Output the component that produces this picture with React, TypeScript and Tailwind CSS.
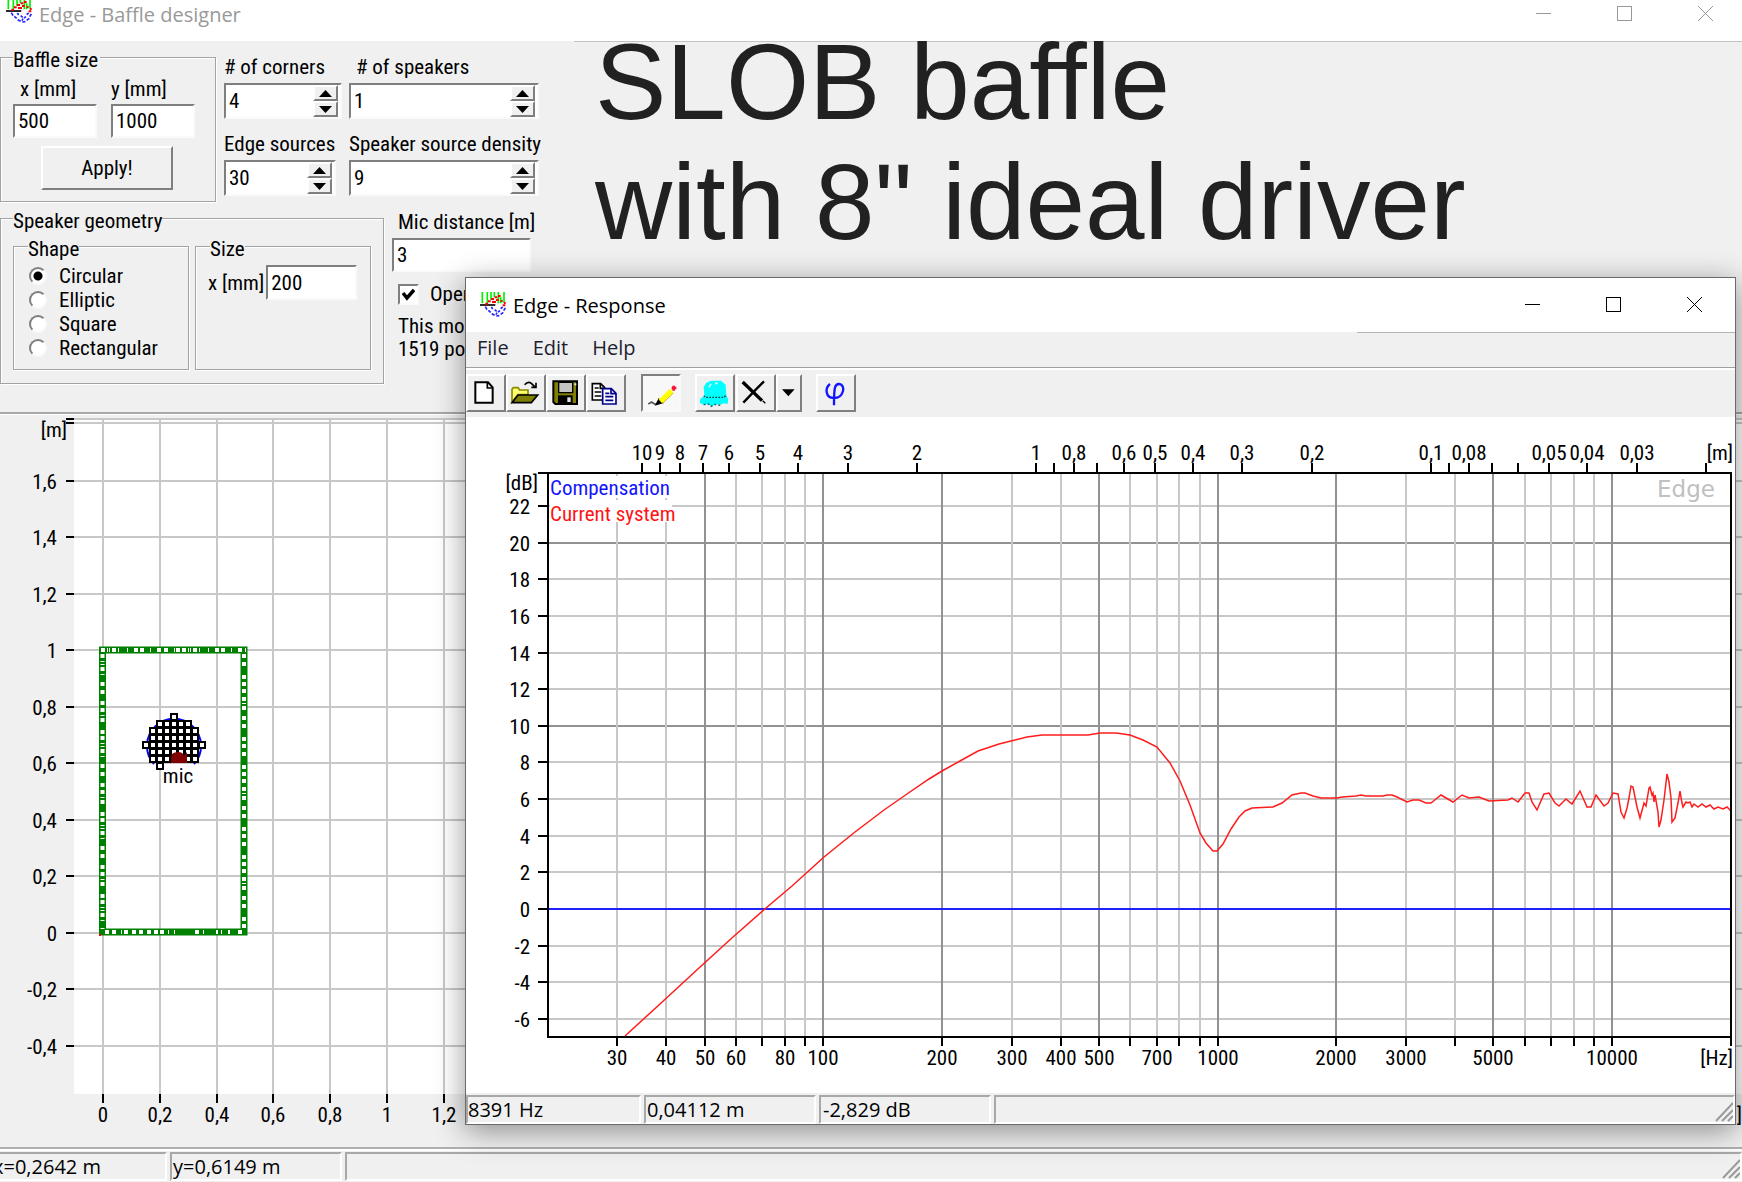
import { useState } from "react";
import type { ReactNode } from "react";
import clsx from "clsx";

const SUNKEN = "border-2 border-t-[#7f7f7f] border-l-[#7f7f7f] border-r-[#fafafa] border-b-[#fafafa]";
const RAISED = "border-2 border-t-white border-l-white border-r-[#7f7f7f] border-b-[#7f7f7f]";
const CONDENSED = "font-['Roboto_Condensed','Liberation_Sans',sans-serif]";
const SEGOE = "font-['Open_Sans','Noto_Sans',sans-serif]";

/* ---------- shared bits ---------- */

function Logo() {
  return (
    <svg className="h-[25px] w-[27px] shrink-0" viewBox="0 0 81 75">
      <path d="M7 0V34M22 0V34M33 0V24M43 0V16M55 0V34M62 16V34M72 0V34" stroke="#00f000" strokeWidth="5" />
      <path d="M0 39H46" stroke="#000" strokeWidth="5" />
      <path d="M16 35h8M24 28h8M33 21h9M44 16h8M54 12h8M36 30h12M48 24h8M62 27h6M68 40h8M72 33h5" stroke="#ff0000" strokeWidth="6" />
      <path
        d="M16 44l5 9M25 55l7 6M35 65l9 5M49 72l9-1M62 67l8-6M71 56l5-8M34 45l4 6M44 53l6 5M54 60l6-4M62 50l6-5M48 68l3-6"
        stroke="#2424ff"
        strokeWidth="5"
      />
    </svg>
  );
}

function WindowButtons({ className }: { className: string }) {
  return (
    <div className={clsx("flex gap-[66px]", className)}>
      <button aria-label="Minimize">
        <svg className="h-[15px] w-[15px]" viewBox="0 0 15 15" stroke="currentColor" fill="none">
          <path d="M0 7.5H15" />
        </svg>
      </button>
      <button aria-label="Maximize">
        <svg className="h-[15px] w-[15px]" viewBox="0 0 15 15" stroke="currentColor" fill="none">
          <rect x="0.5" y="0.5" width="14" height="14" />
        </svg>
      </button>
      <button aria-label="Close">
        <svg className="h-[15px] w-[15px]" viewBox="0 0 15 15" stroke="currentColor" fill="none">
          <path d="M0 0L15 15M15 0L0 15" />
        </svg>
      </button>
    </div>
  );
}

function Group({ title, className, legendClass, children }: { title: string; className: string; legendClass?: string; children: ReactNode }) {
  return (
    <fieldset className={clsx("border border-[#a3a3a3] shadow-[1px_1px_0_#fff,inset_1px_1px_0_#fff]", className)}>
      <legend className={clsx("h-4 bg-[#f0f0f0] leading-[22px]", legendClass)}>{title}</legend>
      {children}
    </fieldset>
  );
}

function Field({ id, value, className }: { id: string; value: string; className: string }) {
  const [text, setText] = useState(value);
  return (
    <input
      id={id}
      type="text"
      value={text}
      onChange={(e) => setText(e.target.value)}
      className={clsx("bg-white pl-[3px] outline-none", SUNKEN, className)}
    />
  );
}

function Spin({ id, value, className }: { id: string; value: number; className: string }) {
  const [n, setN] = useState(value);
  return (
    <div className={clsx("flex h-9 bg-white pr-0.5", SUNKEN, className)}>
      <input
        id={id}
        type="text"
        value={n}
        onChange={(e) => setN(Number(e.target.value) || 0)}
        className="min-w-0 flex-1 bg-white pl-[3px] outline-none"
      />
      <div className="flex w-[25px] flex-col bg-[#f0f0f0]">
        <button aria-label="Increase" onClick={() => setN(n + 1)} className={clsx("flex h-4 items-center justify-center", RAISED)}>
          <svg className="h-[7px] w-[13px]" viewBox="0 0 13 7">
            <path d="M0 7L6.5 0L13 7Z" />
          </svg>
        </button>
        <button aria-label="Decrease" onClick={() => setN(n - 1)} className={clsx("flex h-4 items-center justify-center", RAISED)}>
          <svg className="h-[7px] w-[13px]" viewBox="0 0 13 7">
            <path d="M0 0L6.5 7L13 0Z" />
          </svg>
        </button>
      </div>
    </div>
  );
}

function StatusCell({ children, className }: { children?: ReactNode; className: string }) {
  return (
    <div className={clsx("h-[29px] border-2 border-t-[#a8a8a8] border-l-[#a8a8a8] border-r-white border-b-white leading-[26px] whitespace-nowrap", className)}>
      {children}
    </div>
  );
}

function Grip() {
  return (
    <svg className="h-[20px] w-[18px] self-end" viewBox="0 0 18 20" stroke="#9a9a9a" strokeWidth="2">
      <path d="M1 19L18 1M7 19L18 8M13 19L18 14" />
    </svg>
  );
}

/* ---------- baffle designer ---------- */

const SHAPES = ["Circular", "Elliptic", "Square", "Rectangular"];

function ControlPanel() {
  const [shape, setShape] = useState("Circular");
  const [open, setOpen] = useState(true);

  return (
    <div className="flex w-[574px] shrink-0 flex-col pt-[7px] whitespace-nowrap">
      <div className="flex">
        <Group title="Baffle size" className="h-[153px] w-[216px] shrink-0 pl-3" legendClass="pr-0.5">
          <div className="mt-3 flex gap-[14px]">
            <div className="flex flex-col gap-[3px]">
              <label htmlFor="bx" className="pl-[7px]">x [mm]</label>
              <Field id="bx" value="500" className="h-[34px] w-[84px]" />
            </div>
            <div className="flex flex-col gap-[3px]">
              <label htmlFor="by">y [mm]</label>
              <Field id="by" value="1000" className="h-[34px] w-[84px]" />
            </div>
          </div>
          <button className={clsx("mt-2 ml-7 h-11 w-[132px]", RAISED)}>Apply!</button>
        </Group>
        <div className="ml-2 flex w-[125px] flex-col pt-1.5">
          <label htmlFor="corners">
            # of corners
          </label>
          <Spin id="corners" value={4} className="mt-1 w-[118px]" />
          <label htmlFor="edge" className="mt-[13px]">
            Edge sources
          </label>
          <Spin id="edge" value={30} className="mt-1 w-[112px]" />
        </div>
        <div className="flex flex-col pt-1.5">
          <label htmlFor="speakers" className="pl-[7px]">
            # of speakers
          </label>
          <Spin id="speakers" value={1} className="mt-1 w-[190px]" />
          <label htmlFor="density" className="mt-[13px]">
            Speaker source density
          </label>
          <Spin id="density" value={9} className="mt-1 w-[190px]" />
        </div>
      </div>

      <div className="mt-2 flex">
        <Group title="Speaker geometry" className="h-[174px] w-[384px] shrink-0 pl-3">
          <div className="mt-3 flex gap-1.5">
            <Group title="Shape" className="h-[132px] w-[176px]" legendClass="ml-3.5">
              <div className="mt-2.5 flex flex-col">
                {SHAPES.map((s) => (
                  <label key={s} className="flex items-center gap-3 pl-[15px]">
                    <input
                      type="radio"
                      name="shape"
                      checked={shape === s}
                      onChange={() => setShape(s)}
                      className="h-[18px] w-[18px] appearance-none rounded-full border-2 border-t-[#7f7f7f] border-l-[#7f7f7f] border-r-[#fafafa] border-b-[#fafafa] bg-white checked:bg-[radial-gradient(circle,#000_4px,#fff_5px)]"
                    />
                    {s}
                  </label>
                ))}
              </div>
            </Group>
            <Group title="Size" className="h-[132px] w-[176px]" legendClass="ml-3.5">
              <div className="mt-[11px] flex items-center gap-0.5 pl-3">
                <label htmlFor="sx">x [mm]</label>
                <Field id="sx" value="200" className="h-[35px] w-[91px]" />
              </div>
            </Group>
          </div>
        </Group>
        <div className="ml-2 flex flex-col">
          <label htmlFor="mic" className="pl-1.5">
            Mic distance [m]
          </label>
          <Field id="mic" value="3" className="mt-1 h-[34px] w-[139px]" />
          <label className="mt-2.5 flex items-center gap-[11px] pl-1.5">
            <span className="grid">
              <input
                type="checkbox"
                checked={open}
                onChange={() => setOpen(!open)}
                className={clsx("peer col-start-1 row-start-1 h-[21px] w-[21px] appearance-none bg-white", SUNKEN)}
              />
              <svg className="pointer-events-none col-start-1 row-start-1 m-auto hidden h-[13px] w-[13px] peer-checked:block" viewBox="0 0 13 13">
                <path d="M1 5L5 10L12 2" fill="none" stroke="#000" strokeWidth="3.5" />
              </svg>
            </span>
            Open baffle
          </label>
          <p className="mt-[9px] pl-1.5 leading-[23px]">
            This model has
            <br />
            1519 points
          </p>
        </div>
      </div>
    </div>
  );
}

const METRES_Y = ["1,6", "1,4", "1,2", "1", "0,8", "0,6", "0,4", "0,2", "0", "-0,2", "-0,4"];
const METRES_X = ["0", "0,2", "0,4", "0,6", "0,8", "1", "1,2"];
// columns of the source lattice, row by row
const LATTICE = [[4, 4], [2, 6], [1, 7], [1, 7], [0, 8], [1, 7], [1, 7], [2, 2]];

const my = (i: number) => Math.floor(66 + 56.5 * i);
const mx = (i: number) => Math.round(103 + 56.8 * i);

function BafflePlot() {
  return (
    <svg className="h-[732px] w-full shrink-0 text-[21px]">
      <rect x="74" y="3" width="100%" height="676" fill="#fff" />
      <g stroke="#c8c8c8" strokeWidth="2" shapeRendering="crispEdges">
        {Array.from({ length: 30 }, (_, i) => (
          <path key={i} d={`M${mx(i)} 3V679`} />
        ))}
        <line x1="74" x2="100%" y1="4" y2="4" />
        <line x1="74" x2="100%" y1="8" y2="8" />
        {METRES_Y.map((m, i) => (
          <line key={m} x1="74" x2="100%" y1={my(i)} y2={my(i)} />
        ))}
      </g>
      <g stroke="#000" strokeWidth="2" shapeRendering="crispEdges">
        <path d="M66 4H74M66 8H74" />
        {METRES_Y.map((m, i) => (
          <path key={m} d={`M66 ${my(i)}H74`} />
        ))}
        {Array.from({ length: 30 }, (_, i) => (
          <path key={i} d={`M${mx(i)} 679V688`} />
        ))}
      </g>
      <text x="67" y="22" textAnchor="end">[m]</text>
      {METRES_Y.map((m, i) => (
        <text key={m} x="57" y={my(i) + 8} textAnchor="end">{m}</text>
      ))}
      {METRES_X.map((m, i) => (
        <text key={m} x={mx(i)} y="707" textAnchor="middle">{m}</text>
      ))}
      <text x="100%" y="707" textAnchor="end">[m]</text>

      {/* baffle edge with its sources */}
      <rect x="102.5" y="235" width="141.5" height="282" fill="none" stroke="#008000" strokeWidth="7" />
      <path d="M99 519h2v2h-2z" fill="#f00" />
      <g fill="none" stroke="#fff" strokeWidth="4">
        <path d="M101 235H246" strokeDasharray="4 2 1 1 1 2 4 2 1 8 1 6 4 2 4 6 1 6 4 3 4 6 1 1 4 2" />
        <path d="M101 517H243" strokeDasharray="0 4 4 3 4 5 1 2 4 4 4 3 4 4 4 3 4 2 4 4 1 5 1 20 4 4 1 12 2 3 1 6 2 4" />
        <path d="M102.5 239V514" strokeDasharray="4 3 1 2 1 2 4 3 1 7 4 4 4 7 4 3 4 3 1 2 4 8 4 2" />
        <path d="M244 239V514" strokeDasharray="4 4 4 9 4 3 4 3 4 4 4 2 1 2 4 6 4 4 4 9 4 3" />
      </g>

      {/* driver */}
      <path d="M154 349A27 27 0 1 1 194 349" fill="none" stroke="#0000ff" strokeWidth="2" />
      {LATTICE.map(([from, to], row) =>
        Array.from({ length: to - from + 1 }, (_, k) => (
          <g key={`${row}-${k}`}>
            <rect x={142 + 7 * (from + k)} y={298 + 7 * row} width="8" height="8" fill="#000" />
            <rect x={144 + 7 * (from + k)} y={300 + 7 * row} width="4" height="4" fill="#fff" />
          </g>
        ))
      )}
      <path d="M171 348V343Q171 337 178 337Q183 337 184 341L187 337V348Z" fill="#800000" />
      <text x="178" y="368" textAnchor="middle">mic</text>
    </svg>
  );
}

/* ---------- response window ---------- */

const fx = (hz: number) => Math.round(357.4 + 394.3 * Math.log10(hz / 100));
const wx = (m: number) => Math.round(570 - 394.5 * Math.log10(m));
const dy = (db: number) => Math.round(492 - 18.32 * db);

const FREQS = [30, 40, 50, 60, 70, 80, 90, 100, 200, 300, 400, 500, 600, 700, 800, 900, 1000, 2000, 3000, 4000, 5000, 6000, 7000, 8000, 9000, 10000];
const MAJOR = [50, 100, 200, 500, 1000, 2000, 5000, 10000];
const FREQ_LABELS = [30, 40, 50, 60, 80, 100, 200, 300, 400, 500, 700, 1000, 2000, 3000, 5000, 10000];
const WAVES = [10, 9, 8, 7, 6, 5, 4, 3, 2, 1, 0.9, 0.8, 0.7, 0.6, 0.5, 0.4, 0.3, 0.2, 0.1, 0.09, 0.08, 0.07, 0.06, 0.05, 0.04, 0.03, 0.02];
const NO_WAVE_LABEL = [0.9, 0.7, 0.09, 0.07, 0.06, 0.02];
const LEVELS = [22, 20, 18, 16, 14, 12, 10, 8, 6, 4, 2, 0, -2, -4, -6];

const CURVE =
  "159,619 194,587 233,551 267,520 300,491 326,469 358,440 389,415 418,393 441,377 463,362 476,354 494,344 512,334 533,327 545,324 561,320 576,318 622,318 634,316 650,316 664,318 677,323 691,330 704,346 714,364 724,388 734,416 740,426 747,434 751,434 757,427 765,412 773,400 779,394 786,391 807,390 816,386 826,378 835,376 839,376 847,379 855,381 871,381 876,380 890,379 895,378 900,379 917,379 921,378 926,378 931,380 941,385 947,383 953,383 960,386 965,386 970,382 975,378 987,385 996,378 1003,381 1013,380 1023,384 1042,383 1046,381 1052,385 1059,376 1063,376 1066,385 1071,393 1078,377 1083,376 1089,386 1093,389 1100,382 1106,387 1114,374 1121,390 1125,390 1130,378 1138,389 1142,386 1147,376 1152,377 1155,395 1158,401 1161,391 1163,381 1165,369 1167,370 1171,390 1174,401 1178,386 1180,389 1183,371 1184,370 1186,378 1187,376 1188,385 1189,378 1192,395 1193,410 1195,403 1198,383 1201,357 1203,365 1205,381 1206,405 1209,401 1212,386 1214,374 1216,386 1217,390 1220,385 1222,386 1224,385 1226,390 1228,387 1232,390 1236,387 1240,390 1244,388 1248,392 1252,390 1257,392 1261,390 1265,394";

function ResponseChart() {
  return (
    <svg className="block w-full bg-white text-[21px]" viewBox="0 0 1269 676">
      <g strokeWidth="2" shapeRendering="crispEdges">
        {LEVELS.map((db) => (
          <path key={db} d={`M82 ${dy(db)}H1265`} stroke={db % 10 === 0 ? "#929292" : "#c8c8c8"} />
        ))}
        {FREQS.map((hz) => (
          <path key={hz} d={`M${fx(hz)} 56V619`} stroke={MAJOR.includes(hz) ? "#929292" : "#c8c8c8"} />
        ))}
      </g>

      <rect x="84" y="59" width="118" height="22" fill="#fff" />
      <rect x="84" y="83" width="122" height="22" fill="#fff" />
      <text x="84" y="78" fill="#1414ff">Compensation</text>
      <text x="84" y="104" fill="#ff1414">Current system</text>
      <text x="1220" y="80" textAnchor="middle" fill="#c0c0c0" className="font-['DejaVu_Sans',sans-serif] text-[23px]">
        Edge
      </text>

      <path d={`M82 ${dy(0)}H1265`} stroke="#2020ff" strokeWidth="2" shapeRendering="crispEdges" />
      <polyline points={CURVE} fill="none" stroke="#ff1c1c" strokeWidth="1.5" />

      <g stroke="#000" strokeWidth="2" fill="none" shapeRendering="crispEdges">
        <path d="M72 56H1265V620H82V56" />
        {LEVELS.map((db) => (
          <path key={db} d={`M72 ${dy(db)}H82`} />
        ))}
        {FREQS.map((hz) => (
          <path key={hz} d={`M${fx(hz)} 620V629`} />
        ))}
        <path d="M1265 620V629" />
        {WAVES.map((m) => (
          <path key={m} d={`M${wx(m)} 46V56`} />
        ))}
      </g>

      <text x="72" y="73" textAnchor="end">[dB]</text>
      {LEVELS.map((db) => (
        <text key={db} x="64" y={dy(db) + 8} textAnchor="end">{db}</text>
      ))}
      {FREQ_LABELS.map((hz) => (
        <text key={hz} x={fx(hz)} y="648" textAnchor="middle">{hz}</text>
      ))}
      <text x="1267" y="648" textAnchor="end">[Hz]</text>
      {WAVES.filter((m) => !NO_WAVE_LABEL.includes(m)).map((m) => (
        <text key={m} x={wx(m)} y="43" textAnchor="middle">{String(m).replace(".", ",")}</text>
      ))}
      <text x="1267" y="43" textAnchor="end">[m]</text>
    </svg>
  );
}

function Tool({ label, pressed, narrow, children }: { label: string; pressed?: boolean; narrow?: boolean; children: ReactNode }) {
  return (
    <button aria-label={label} className={clsx("h-[38px]", narrow ? "w-[26px]" : "w-10", pressed ? clsx(SUNKEN, "bg-[#f8f8f8]") : RAISED)}>
      <svg className="h-[34px] w-full" viewBox={narrow ? "6 6 66 102" : "6 6 108 102"} fill="none">
        {children}
      </svg>
    </button>
  );
}

function Toolbar() {
  return (
    <div className="flex h-[50px] border-t border-[#a0a0a0] pt-[6px] shadow-[inset_0_2px_0_#fff]">
      <Tool label="New">
        <path d="M28 25H66L80 40V86H28Z" fill="#fff" stroke="#000" strokeWidth="6" />
        <path d="M64 25V42H80" stroke="#000" strokeWidth="5" />
      </Tool>
      <Tool label="Open">
        <path d="M18 84V46L22 41H36L41 48H66V62H36Z" fill="#ffff70" stroke="#8a8a00" strokeWidth="5" />
        <path d="M18 86L36 63H95L76 86Z" fill="#808000" stroke="#000" strokeWidth="5" />
        <path d="M56 32Q66 20 76 28L86 38M90 26V40H76" stroke="#000" strokeWidth="5" />
      </Tool>
      <Tool label="Save">
        <path d="M22 22H93V90H28L22 84Z" fill="#808000" stroke="#000" strokeWidth="6" />
        <path d="M38 25H80V56H38Z" fill="#c4c4c4" stroke="#000" strokeWidth="4" />
        <path d="M36 64H80V90H36Z" fill="#000" />
        <path d="M64 70H74V84H64Z" fill="#e4e4e4" />
        <path d="M85 28H91V34H85Z" fill="#e4e4e4" />
      </Tool>
      <Tool label="Copy">
        <path d="M19 29H44L56 41V78H19Z" fill="#fff" stroke="#000" strokeWidth="5" />
        <path d="M26 42H38M26 54H46M26 66H46M43 29V43H55" stroke="#000" strokeWidth="5" />
        <path d="M50 44H76L90 58V90H50Z" fill="#fff" stroke="#000090" strokeWidth="5" />
        <path d="M58 58H70M58 68H82M58 79H82M75 44V59H89" stroke="#000090" strokeWidth="5" />
      </Tool>
      <div className="w-[15px]" />
      <Tool label="Draw" pressed>
        <path d="M22 90L32 84L40 90H50" stroke="#555" strokeWidth="5" />
        <path d="M46 91L54 76L64 86Z" fill="#000" stroke="#000" strokeWidth="5" />
        <path d="M58 82L92 50" stroke="#ffff00" strokeWidth="15" />
        <path d="M66 87L97 57" stroke="#c8b400" strokeWidth="3" />
        <path d="M92 42H106M98 35V50" stroke="#ff1030" strokeWidth="8" />
      </Tool>
      <div className="w-[14px]" />
      <Tool label="Baffle">
        <path d="M28 66L26 40L34 26L48 20L78 20L92 32L94 64L100 76L98 90L86 88L76 92L60 90L50 98L40 90L26 92L14 86L16 74Z" fill="#00ffff" />
        <path d="M26 66L36 70H86L94 64" stroke="#003c3c" strokeWidth="4" strokeDasharray="5 4" />
        <path d="M26 92L40 90L48 97L60 91L76 94" stroke="#006464" strokeWidth="4" strokeDasharray="6 6" />
        <path d="M42 40L48 30M60 28H68" stroke="#dff" strokeWidth="5" />
      </Tool>
      <div className="w-px" />
      <Tool label="Delete">
        <path d="M20 24L78 80" stroke="#000" strokeWidth="10" />
        <path d="M84 22L60 46L22 86" stroke="#000" strokeWidth="7" />
        <path d="M80 80L88 88" stroke="#000" strokeWidth="4" />
      </Tool>
      <Tool label="Delete options" narrow>
        <path d="M18 46H56L37 67Z" fill="#000" />
      </Tool>
      <div className="w-[14px]" />
      <Tool label="Phase">
        <path d="M42 30C26 42 28 72 54 72C84 72 90 32 70 30C56 29 54 40 54 94" stroke="#1414ff" strokeWidth="7" />
      </Tool>
    </div>
  );
}

function ResponseWindow() {
  return (
    <section className="absolute top-[277px] right-[6px] left-[465px] border border-[#6a6a6a] bg-[#f0f0f0] shadow-[0_6px_28px_rgba(0,0,0,0.42)]">
      <header className="flex h-[54px] items-center bg-white pr-[33px] pb-0.5 pl-[14px]">
        <Logo />
        <h2 className={clsx("ml-[6px] pt-1 text-[20px] text-black", SEGOE)}>Edge - Response</h2>
        <WindowButtons className="ml-auto text-black" />
      </header>
      <div className="ml-[891px] h-px bg-[#b4b4b4]" />
      <nav className={clsx("flex h-[34px] items-center gap-6 pb-1 pl-[11px] text-[20px] text-[#1e1e30]", SEGOE)}>
        <button>File</button>
        <button>Edit</button>
        <button>Help</button>
      </nav>
      <Toolbar />
      <ResponseChart />
      <footer className={clsx("flex items-center pt-0.5 text-[20px]", SEGOE)}>
        <StatusCell className="w-[175px]">8391 Hz</StatusCell>
        <StatusCell className="ml-[3px] w-[172px] pl-px">0,04112 m</StatusCell>
        <StatusCell className="ml-[3px] w-[172px] pl-0.5">-2,829 dB</StatusCell>
        <StatusCell className="ml-[3px] flex flex-1 justify-end">
          <Grip />
        </StatusCell>
      </footer>
    </section>
  );
}

export default function App() {
  return (
    <main className={clsx("relative flex min-h-screen flex-col overflow-hidden bg-[#f0f0f0] text-[21px] leading-6 text-black", CONDENSED)}>
      <header className="flex h-[41px] items-start bg-white pr-[29px] pl-[6px]">
        <div className="-mt-0.5">
          <Logo />
        </div>
        <h2 className={clsx("ml-[6px] pt-[3px] text-[20px] text-[#999]", SEGOE)}>Edge - Baffle designer</h2>
        <WindowButtons className="ml-auto pt-1.5 text-[#999]" />
      </header>
      <div className="ml-[574px] h-px bg-[#c4c4c4]" />

      <div className="flex h-[370px]">
        <ControlPanel />
        <h1 className="-mt-5 ml-[21px] font-['Liberation_Sans',sans-serif] text-[107px] leading-[120px] whitespace-nowrap text-[#212121]">
          SLOB baffle
          <br />
          with 8" ideal driver
        </h1>
      </div>

      <div className="h-[3px] border-t-2 border-[#a8a8a8] bg-white" />
      <BafflePlot />
      <footer className={clsx("flex border-t-2 border-[#b0b0b0] pt-[3px] text-[20px] shadow-[inset_0_2px_0_#fff]", SEGOE)}>
        <StatusCell className="-ml-2.5 w-[177px] pl-px">x=0,2642 m</StatusCell>
        <StatusCell className="ml-[3px] w-[172px] pl-px">y=0,6149 m</StatusCell>
        <StatusCell className="ml-[3px] flex flex-1 justify-end">
          <Grip />
        </StatusCell>
      </footer>

      <ResponseWindow />
    </main>
  );
}
